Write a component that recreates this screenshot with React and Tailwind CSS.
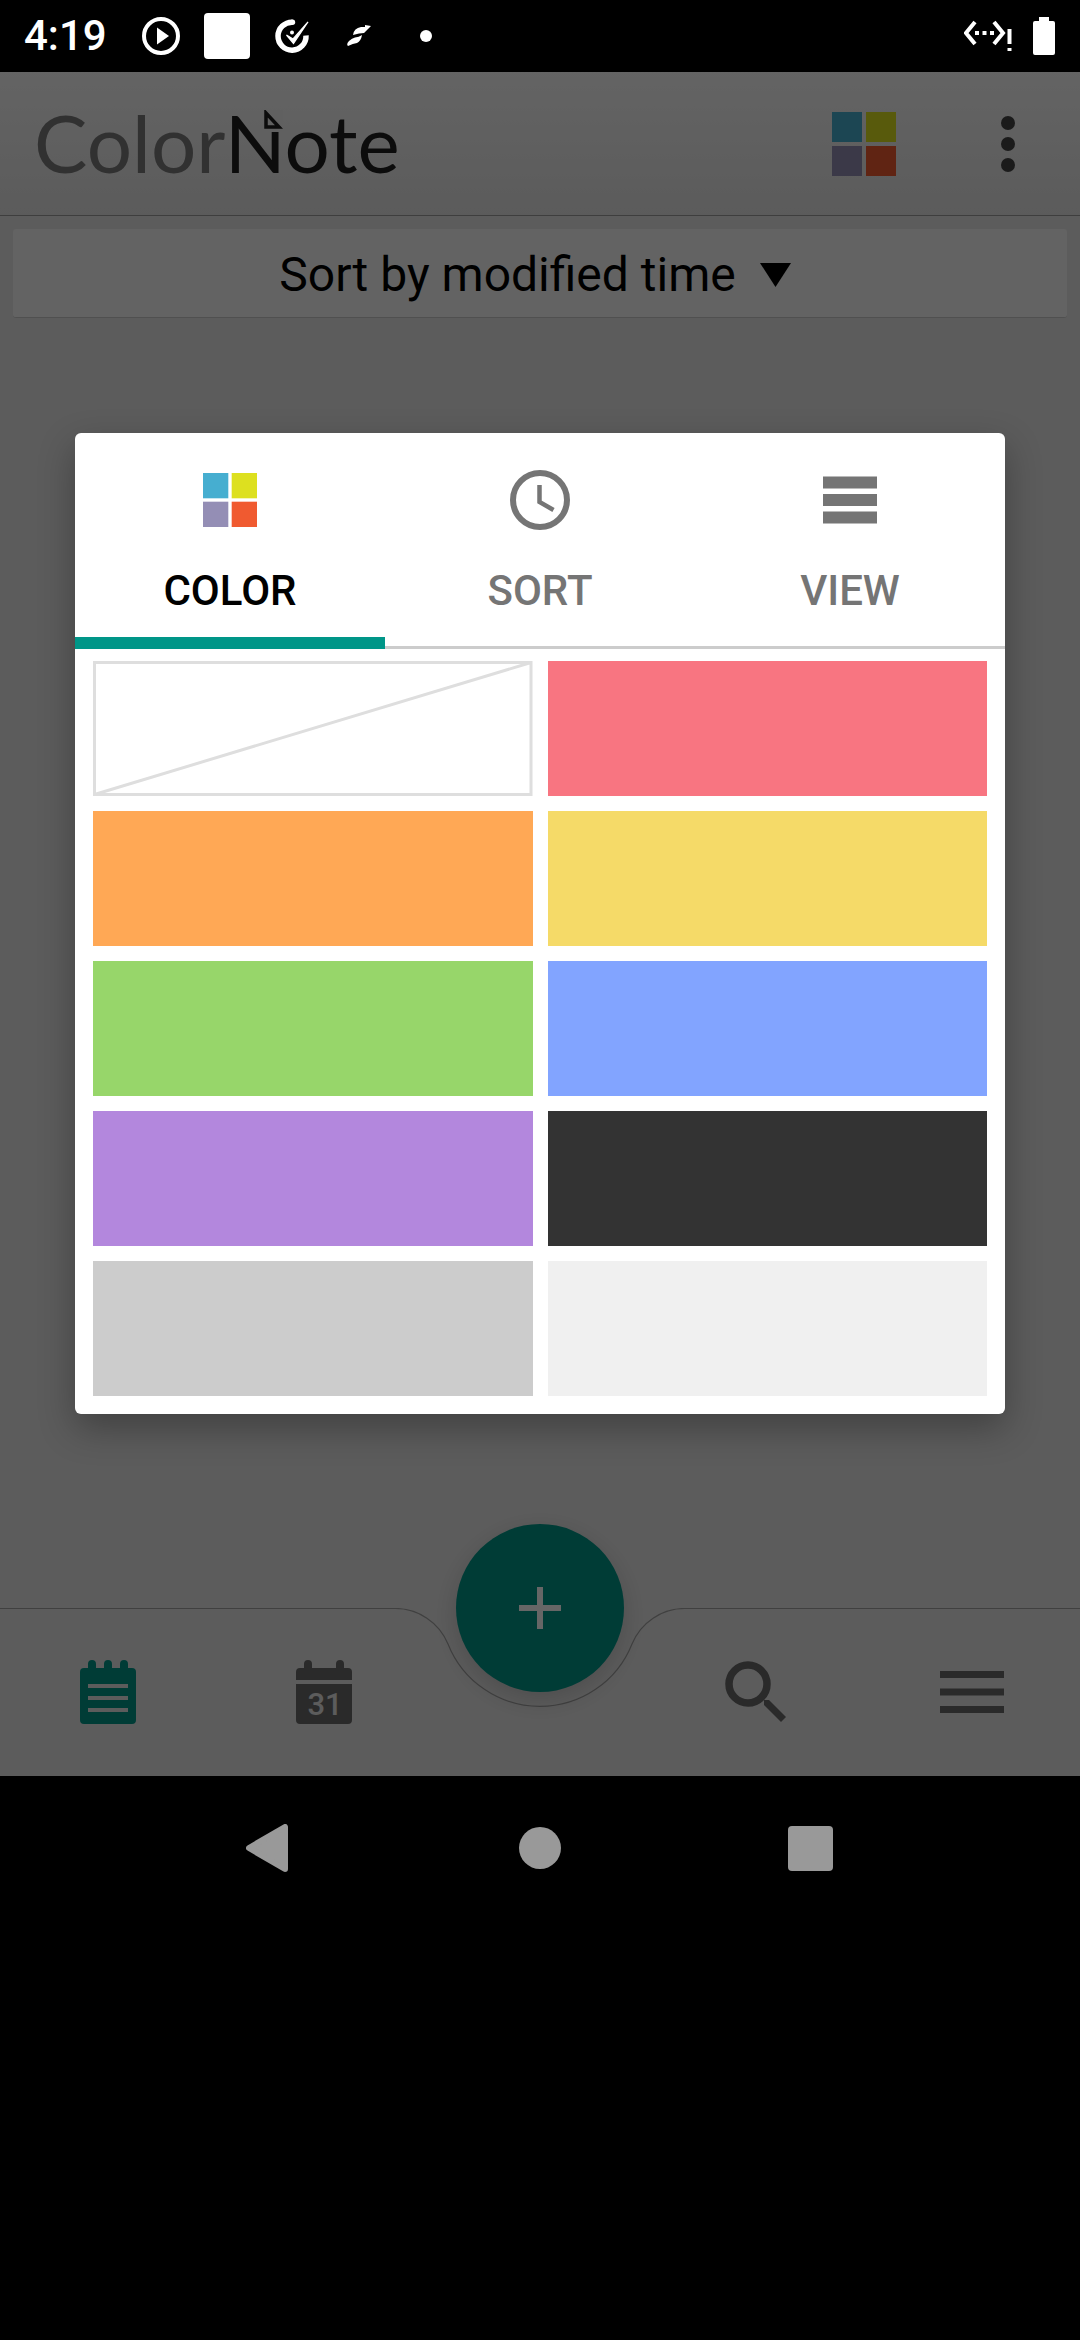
import React from "react";

function ColorGrid({ className }) {
  return (
    <svg viewBox="0 0 64 64" className={className} aria-hidden="true">
      <rect x="0" y="0" width="30" height="30" fill="#46aed0" />
      <rect x="34" y="0" width="30" height="30" fill="#dde01f" />
      <rect x="0" y="34" width="30" height="30" fill="#948eb5" />
      <rect x="34" y="34" width="30" height="30" fill="#f05a30" />
    </svg>
  );
}

function StatusBar() {
  return (
    <div className="flex h-[72px] items-center justify-between bg-black px-6 text-white">
      <div className="flex items-center">
        <span className="w-[84px] text-[42px] leading-none font-medium">4:19</span>
        <svg viewBox="0 0 38 38" className="ml-[34px] h-[38px] w-[38px]" aria-hidden="true">
          <circle cx="19" cy="19" r="17" fill="none" stroke="#fff" strokeWidth="4" />
          <path d="M15 10.500L27 19L15 27.500Z" fill="#fff" />
        </svg>
        <div className="ml-6 h-[46px] w-[46px] rounded-[4px] bg-white" />
        <svg viewBox="0 0 36 36" className="ml-[25px] h-9 w-9" aria-hidden="true">
          <path d="M17.500 4.200A14 14 0 1 0 31 17.500" fill="none" stroke="#fff" strokeWidth="5.500" />
          <circle cx="17.500" cy="4.200" r="2.700" fill="#fff" />
          <path d="M11.500 17L18 21L33 4L18.500 25.500Z" fill="#fff" stroke="#fff" strokeWidth="1.200" />
          <circle cx="17" cy="14.500" r="2" fill="#fff" />
        </svg>
        <svg viewBox="0 0 24 22" className="ml-9 h-[22px] w-6" aria-hidden="true">
          <path d="M6 10Q7 3 14 2L18 2L18 0L24 1L17 8Q15 8 12 8.500Q9 9 6 10Z" fill="#fff" />
          <path d="M15 10Q14 16 10 18Q6 18.500 1 21Q-1 19 2 16Q5 13 8 12.500Q12 12 15 10Z" fill="#fff" />
        </svg>
        <div className="ml-[49px] h-3 w-3 rounded-full bg-white" />
      </div>
      <div className="flex items-center">
        <svg viewBox="0 0 48 32" className="h-8 w-12" aria-hidden="true">
          <path d="M11 2L2 13L11 24M30 2L39 13L30 24" fill="none" stroke="#fff" strokeWidth="4" />
          <path d="M11 11h4v4h-4zM18.500 11h4v4h-4zM26 11h4v4h-4zM43.500 9h4v15h-4zM43.500 28h4v3h-4z" fill="#fff" />
        </svg>
        <svg viewBox="0 0 24 40" className="ml-5 h-10 w-6" aria-hidden="true">
          <path d="M7 1h10v4h4a2 2 0 0 1 2 2v30a2 2 0 0 1-2 2h-18a2 2 0 0 1-2-2v-30a2 2 0 0 1 2-2h4z" fill="#fff" />
        </svg>
      </div>
    </div>
  );
}

function Header() {
  return (
    <header className="flex h-[144px] items-center justify-between border-b border-[#9c9c9c] bg-linear-to-b from-[#f9f9f9] to-[#e4e4e4] pr-12 pl-[34px]">
      <h1 className="relative pb-1 font-[Lato,sans-serif] text-[80px] leading-none text-[#1e1e1e]">
        <span className="text-[#7c7c7c]">Color</span>Note
        <svg viewBox="0 0 20 22" className="absolute top-[8px] left-[229px] h-[22px] w-5" aria-hidden="true">
          <rect width="20" height="22" fill="#f1f1f1" />
          <path d="M3 3V17H16Z" fill="none" stroke="#1e1e1e" strokeWidth="3.500" />
        </svg>
      </h1>
      <div className="flex items-center">
        <button type="button" aria-label="Color" className="block">
          <ColorGrid className="h-16 w-16" />
        </button>
        <button type="button" aria-label="More options" className="ml-[88px] flex w-12 flex-col items-center gap-[7px]">
          <span className="h-[14px] w-[14px] rounded-full bg-[#454545]" />
          <span className="h-[14px] w-[14px] rounded-full bg-[#454545]" />
          <span className="h-[14px] w-[14px] rounded-full bg-[#454545]" />
        </button>
      </div>
    </header>
  );
}

function BottomBar() {
  return (
    <nav className="relative mt-auto h-[168px]">
      <div className="absolute inset-x-0 top-0 flex">
        <div className="h-px grow bg-[#a0a0a0]" />
        <svg viewBox="0 0 300 104" className="h-[104px] w-[300px]" aria-hidden="true">
          <path d="M0 .5H5A57 57 0 0 1 58 36A99 99 0 0 0 242 36A57 57 0 0 1 295 .5H300" fill="none" stroke="#a0a0a0" strokeWidth="1.200" />
        </svg>
        <div className="h-px grow bg-[#a0a0a0]" />
      </div>
      <div className="relative grid h-full grid-cols-5">
        <button type="button" aria-label="Notes" className="flex items-center justify-center">
          <svg viewBox="0 0 56 64" className="h-16 w-14" aria-hidden="true">
            <path d="M4 8H8V4a4 4 0 0 1 8 0V8h8V4a4 4 0 0 1 8 0V8h8V4a4 4 0 0 1 8 0V8h4a4 4 0 0 1 4 4V60a4 4 0 0 1-4 4H4a4 4 0 0 1-4-4V12a4 4 0 0 1 4-4Z" fill="#009688" />
            <path d="M8 26H48M8 38H48M8 50H48" stroke="#e6e6e6" strokeWidth="4" />
          </svg>
        </button>
        <button type="button" aria-label="Calendar" className="flex items-center justify-center">
          <svg viewBox="0 0 56 64" className="h-16 w-14" aria-hidden="true">
            <path d="M4 8H8V4a4 4 0 0 1 8 0V8h24V4a4 4 0 0 1 8 0V8h4a4 4 0 0 1 4 4V20H0V12a4 4 0 0 1 4-4ZM0 24H56V60a4 4 0 0 1-4 4H4a4 4 0 0 1-4-4Z" fill="#696969" />
            <text x="29" y="55" textAnchor="middle" fontFamily="Roboto, sans-serif" fontSize="31" fontWeight="500" fill="#e6e6e6">31</text>
          </svg>
        </button>
        <button
          type="button"
          aria-label="Add note"
          className="-mt-[84px] flex h-[168px] w-[168px] items-center justify-center justify-self-center rounded-full bg-[#009688] shadow-[0_8px_24px_rgba(0,0,0,0.16)]"
        >
          <svg viewBox="0 0 42 42" className="h-[42px] w-[42px]" aria-hidden="true">
            <path d="M21 0V42M0 21H42" stroke="#fff" strokeWidth="6" />
          </svg>
        </button>
        <button type="button" aria-label="Search" className="flex items-center justify-center">
          <svg viewBox="0 0 62 62" className="h-[62px] w-[62px]" aria-hidden="true">
            <circle cx="23" cy="23" r="19" fill="none" stroke="#696969" strokeWidth="7.500" />
            <path d="M39 39H44L61 56L56 61L39 44Z" fill="#696969" />
          </svg>
        </button>
        <button type="button" aria-label="Menu" className="flex items-center justify-center">
          <svg viewBox="0 0 64 42" className="h-[42px] w-16" aria-hidden="true">
            <path d="M0 3.500H64M0 21H64M0 38.500H64" stroke="#696969" strokeWidth="7" />
          </svg>
        </button>
      </div>
    </nav>
  );
}

const TABS = [
  {
    label: "COLOR",
    selected: true,
    icon: <ColorGrid className="h-[54px] w-[54px]" />,
  },
  {
    label: "SORT",
    selected: false,
    icon: (
      <svg viewBox="0 0 60 60" className="h-[60px] w-[60px]" aria-hidden="true">
        <circle cx="30" cy="30" r="27" fill="none" stroke="#757575" strokeWidth="6" />
        <path d="M29.500 15V32L43.500 40" fill="none" stroke="#757575" strokeWidth="4.500" />
      </svg>
    ),
  },
  {
    label: "VIEW",
    selected: false,
    icon: (
      <svg viewBox="0 0 54 48" className="h-12 w-[54px]" aria-hidden="true">
        <path d="M0 6.500H54M0 24H54M0 41.500H54" stroke="#757575" strokeWidth="12" />
      </svg>
    ),
  },
];

const COLORS = [
  ["Red", "bg-[#f87581]"],
  ["Orange", "bg-[#ffa855]"],
  ["Yellow", "bg-[#f5da68]"],
  ["Green", "bg-[#97d66a]"],
  ["Blue", "bg-[#82a4ff]"],
  ["Purple", "bg-[#b387dd]"],
  ["Black", "bg-[#333333]"],
  ["Gray", "bg-[#cccccc]"],
  ["White", "bg-[#f0f0f0]"],
];

function ColorDialog() {
  return (
    <div role="dialog" aria-label="Color" className="mx-[75px] w-full rounded-[6px] bg-white shadow-[0_14px_36px_rgba(0,0,0,0.3)]">
      <div role="tablist" className="grid grid-cols-3">
        {TABS.map((tab) => (
          <button
            key={tab.label}
            type="button"
            role="tab"
            aria-selected={tab.selected}
            className={
              tab.selected
                ? "flex h-[216px] flex-col items-center border-b-12 border-[#009688] pt-[31px] text-black"
                : "flex h-[216px] flex-col items-center border-b-3 border-[#cccccc] pt-[31px] text-[#757575]"
            }
          >
            <span className="flex h-[72px] items-center">{tab.icon}</span>
            <span className="mt-[31px] text-[42px] leading-[48px] font-medium">{tab.label}</span>
          </button>
        ))}
      </div>
      <div className="grid grid-cols-2 gap-[15px] px-[18px] pt-3 pb-[18px]">
        <button type="button" aria-label="No color" className="h-[135px]">
          <svg viewBox="0 0 439 135" preserveAspectRatio="none" className="h-full w-full" aria-hidden="true">
            <path d="M1.500 1.500H437.500V133.500H1.500ZM1.500 133.500L437.500 1.500" fill="none" stroke="#dedede" strokeWidth="3" />
          </svg>
        </button>
        {COLORS.map(([name, fill]) => (
          <button key={name} type="button" aria-label={name} className={`h-[135px] ${fill}`} />
        ))}
      </div>
    </div>
  );
}

function SystemNav() {
  return (
    <div className="flex h-36 items-center justify-center gap-[180px] bg-black">
      <button type="button" aria-label="Back" className="flex w-[90px] justify-center">
        <svg viewBox="0 0 48 48" className="h-12 w-12" aria-hidden="true">
          <path d="M3 24L39 3V45Z" fill="#999" stroke="#999" strokeWidth="6" strokeLinejoin="round" />
        </svg>
      </button>
      <button type="button" aria-label="Home" className="flex w-[90px] justify-center">
        <span className="h-[42px] w-[42px] rounded-full bg-[#999999]" />
      </button>
      <button type="button" aria-label="Recents" className="flex w-[90px] justify-center">
        <span className="h-[45px] w-[45px] rounded-[4px] bg-[#999999]" />
      </button>
    </div>
  );
}

export default function App() {
  return (
    <div className="min-h-screen bg-black font-[Roboto,sans-serif]">
      <StatusBar />
      <div className="relative">
        <main className="flex min-h-[1704px] flex-col bg-[#e6e6e6]">
          <Header />
          <div className="flex flex-col px-[13px] pt-[13px]">
            <button
              type="button"
              className="flex h-[89px] items-center justify-center gap-6 rounded-[3px] border-b border-[#c8c8c8] bg-[#f7f7f7] pt-1 pr-[10px] text-[48px] leading-none text-black"
            >
              Sort by modified time
              <svg viewBox="0 0 31 24" className="h-6 w-[31px]" aria-hidden="true">
                <path d="M0 0H31L15.500 24Z" fill="#000" />
              </svg>
            </button>
          </div>
          <BottomBar />
        </main>
        <div className="absolute inset-0 flex items-start bg-black/60 pt-[361px]">
          <ColorDialog />
        </div>
      </div>
      <SystemNav />
    </div>
  );
}
